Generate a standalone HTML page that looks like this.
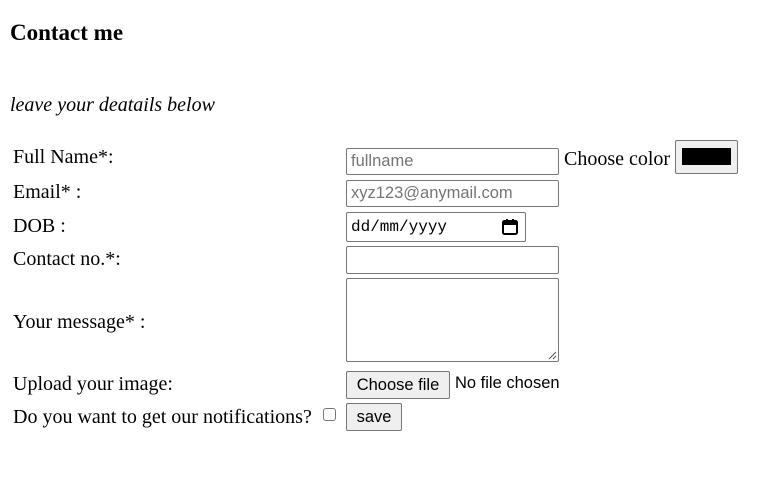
<!DOCTYPE html>
<html><head><style>
body{margin:0;width:762px;height:487px;background:#fff;font-family:"Liberation Serif",serif;color:#000;position:relative;overflow:hidden}
.a{position:absolute;white-space:nowrap}
.t{font-size:20px}
.in{position:absolute;border:1px solid #767676;border-radius:2px;background:#fff;box-sizing:border-box;font-family:"Liberation Sans",sans-serif;font-size:16.5px;color:#757575;padding-left:4px;line-height:24px}
.btn{position:absolute;box-sizing:border-box;border:1px solid #767676;border-radius:2px;background:#efefef;font-family:"Liberation Sans",sans-serif;font-size:16.5px;text-align:center;color:#000}
</style></head><body>
<div class="a" style="left:10px;top:20px;font-size:23px;font-weight:bold">Contact me</div>
<div class="a t" style="left:10px;top:94px;font-style:italic">leave your deatails below</div>
<div class="a t" style="left:13px;top:146px">Full Name*:</div>
<div class="a t" style="left:13px;top:181px">Email* :</div>
<div class="a t" style="left:13px;top:215px">DOB :</div>
<div class="a t" style="left:13px;top:248px">Contact no.*:</div>
<div class="a t" style="left:13px;top:311px">Your message* :</div>
<div class="a t" style="left:13px;top:373px">Upload your image:</div>
<div class="a t" style="left:13px;top:406px">Do you want to get our notifications?</div>
<div style="position:absolute;left:323px;top:408px;width:13px;height:13px;border:1px solid #767676;border-radius:3px;box-sizing:border-box"></div>
<div class="in" style="left:346px;top:148px;width:213px;height:27px">fullname</div>
<div class="a t" style="left:564px;top:148px">Choose color</div>
<div class="btn" style="left:675px;top:140px;width:63px;height:34px"><div style="position:absolute;left:6px;top:7px;width:49px;height:17px;background:#000"></div></div>
<div class="in" style="left:346px;top:180px;width:213px;height:27px">xyz123@anymail.com</div>
<div class="in" style="left:346px;top:212px;width:180px;height:30px;color:#000;font-family:'Liberation Mono',monospace;font-size:16px;line-height:28px">dd/mm/yyyy
<svg style="position:absolute;left:154px;top:5px" width="18" height="18" viewBox="0 0 18 18"><rect x="2" y="3" width="14" height="13" rx="1.5" fill="none" stroke="#000" stroke-width="2"/><rect x="2" y="3" width="14" height="4" fill="#000"/><rect x="5" y="1" width="2" height="3" fill="#000"/><rect x="11" y="1" width="2" height="3" fill="#000"/></svg></div>
<div class="in" style="left:346px;top:246px;width:213px;height:28px"></div>
<div class="in" style="left:346px;top:278px;width:213px;height:84px"><svg style="position:absolute;right:1px;bottom:1px" width="10" height="10"><path d="M2 9L9 2M6 9L9 6" stroke="#555" stroke-width="1"/></svg></div>
<div class="btn" style="left:346px;top:371px;width:104px;height:28px;line-height:26px">Choose file</div>
<div class="a" style="left:455px;top:374px;font-family:'Liberation Sans',sans-serif;font-size:16.5px">No file chosen</div>
<div class="btn" style="left:346px;top:403px;width:56px;height:28px;line-height:26px">save</div>
</body></html>
